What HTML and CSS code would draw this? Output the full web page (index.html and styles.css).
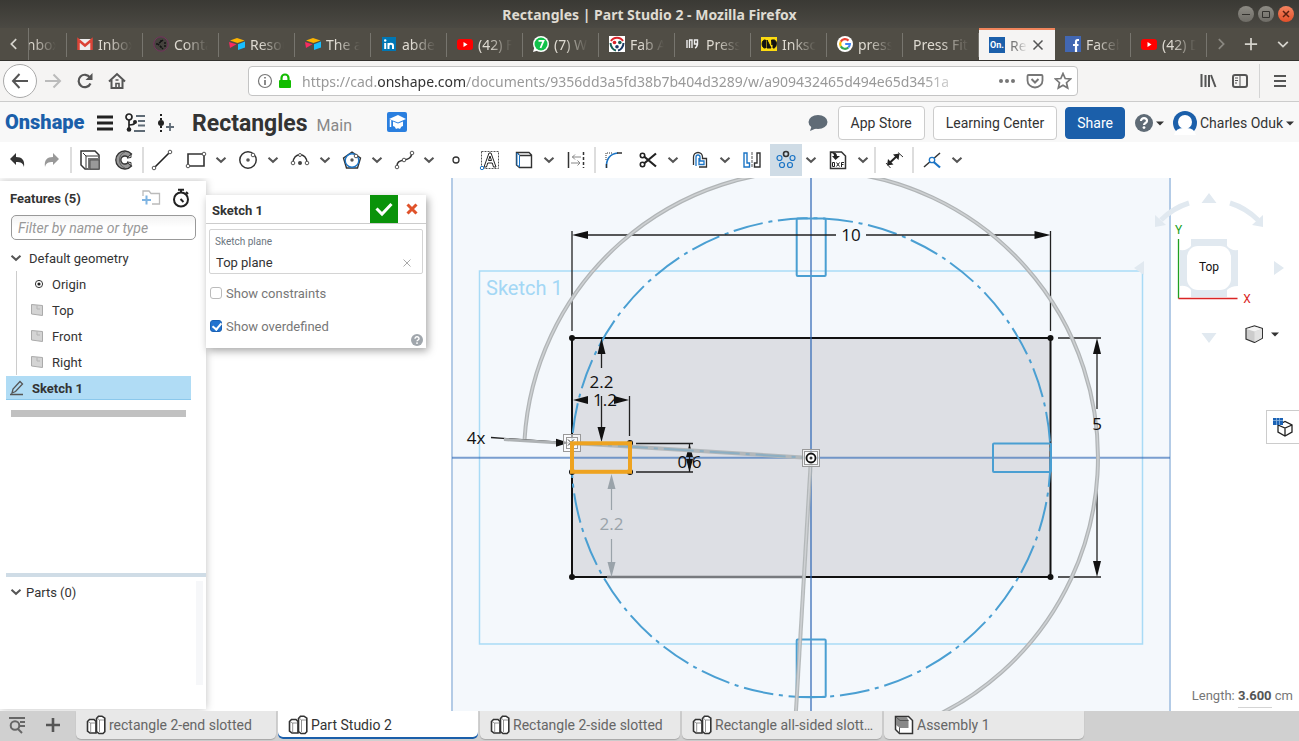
FILE: index.html
```html
<!DOCTYPE html>
<html lang="en">
<head>
    <meta charset="UTF-8">
    <meta name="viewport" content="width=device-width, initial-scale=1.0">
    <title>Rectangles | Part Studio 2</title>
    <link rel="stylesheet" href="styles.css">
</head>
<body>
    <!-- shared icons -->
    <svg class="defs" aria-hidden="true">
        <symbol id="chev" viewBox="0 0 12 12"><path d="M1.5 3.8 6 7.8l4.5-4" fill="none" stroke="#555" stroke-width="2"/></symbol>
        <symbol id="caret" viewBox="0 0 8 5"><path d="M0 .5h8L4 4.5z" fill="#333"/></symbol>
        <symbol id="youtube" viewBox="0 0 16 16"><rect x="0" y="3" width="16" height="11" rx="3" fill="#f00"/><path d="M6.500 6v5l4-2.500z" fill="#fff"/></symbol>
        <symbol id="airtable" viewBox="0 0 16 16"><path d="M1 4.500 8 2l7.500 2.500L8.500 7z" fill="#fcb400"/><path d="M9 8.200 16 5.500v6L9 14z" fill="#18bfff"/><path d="M0 6l7.500 2.300L1 12z" fill="#f82b60"/></symbol>
        <symbol id="studio" viewBox="0 0 20 20"><path d="M1.500 6.500 3.500 4.500H8l2 2V18H4l-2.500-2z" fill="#fff" stroke="#333" stroke-width="1.600"/><path d="M2 6.500l2.500 1.500H9.500M4.700 8v9.500" fill="none" stroke="#777" stroke-width=".8"/><path d="M10.500 3.500 12.500 1.200H16l2.800 2v13.500L17 18.500h-4l-2.500-2z" fill="#fff" stroke="#333" stroke-width="1.600"/><path d="M11 3l2.500 2H18M13.500 5v12" fill="none" stroke="#777" stroke-width=".8"/></symbol>
        <symbol id="plane" viewBox="0 0 12 12"><path d="M.5.500 11.500 1.500v10L.5 10z" fill="#d4d4d4" stroke="#aaa"/><path d="M6 1.500V5h3" fill="none" stroke="#b4b4b4"/></symbol>
        <symbol id="help" viewBox="0 0 18 18"><circle cx="9" cy="9" r="9" fill="currentColor"/><path d="M6 7c0-4 6.200-3.700 6 0 0 2-3 2-3 4" fill="none" stroke="#fff" stroke-width="2.200"/><circle cx="9" cy="13.600" r="1.400" fill="#fff"/></symbol>
    </svg>

    <div class="titlebar">
        <span class="titlebar-text">Rectangles | Part Studio 2 - Mozilla Firefox</span>
        <div class="window-buttons">
            <button class="win-btn" aria-label="Minimize"><svg viewBox="0 0 16 16"><path d="M4 8.500h8" stroke="#33322e"/></svg></button>
            <button class="win-btn" aria-label="Maximize"><svg viewBox="0 0 16 16"><path d="M4.500 5.500h7v6h-7z" fill="none" stroke="#33322e"/></svg></button>
            <button class="win-btn win-close" aria-label="Close"><svg viewBox="0 0 16 16"><path d="M5 5l6 6M11 5l-6 6" stroke="#5a2010" stroke-width="1.500"/></svg></button>
        </div>
    </div>

    <div class="tabbar">
        <button class="tab-arrow" aria-label="Scroll tabs left"><svg viewBox="0 0 16 16"><path d="M10.500 2.500 5 8l5.500 5.500" fill="none" stroke="#d5d3cc" stroke-width="2"/></svg></button>
        <div class="tabs">
            <div class="tab"><span class="favicon"></span><span class="tab-label">Inbox</span></div>
            <div class="tab">
                <svg class="favicon" viewBox="0 0 16 16"><path d="M1 3h14v11H1z" fill="#eee"/><path d="M1.500 14V4L8 9.500 14.500 4v10" fill="none" stroke="#db4437" stroke-width="2.500"/></svg>
                <span class="tab-label">Inbox</span>
            </div>
            <div class="tab">
                <svg class="favicon" viewBox="0 0 16 16"><circle cx="8" cy="8" r="7.200" fill="#45423d" stroke="#75325f"/><path d="M10 4 5 8l5 5M8 4v3M3 8h2M8 10v3M12 6v5" fill="none" stroke="#141414" stroke-width="1.500" stroke-dasharray="2 1"/></svg>
                <span class="tab-label">Contact</span>
            </div>
            <div class="tab"><svg class="favicon"><use href="#airtable"/></svg><span class="tab-label">Resources</span></div>
            <div class="tab"><svg class="favicon"><use href="#airtable"/></svg><span class="tab-label">The art</span></div>
            <div class="tab">
                <svg class="favicon" viewBox="0 0 16 16"><rect x="1" y="1" width="14" height="14" fill="#0077b5"/><circle cx="4.200" cy="4.500" r="1.200" fill="#fff"/><path d="M4.200 7v6M7.500 7v6M7.500 10c0-3 4.500-3 4.500 0v3" fill="none" stroke="#fff" stroke-width="2"/></svg>
                <span class="tab-label">abdel</span>
            </div>
            <div class="tab"><svg class="favicon"><use href="#youtube"/></svg><span class="tab-label">(42) Fab</span></div>
            <div class="tab">
                <svg class="favicon" viewBox="0 0 16 16"><circle cx="8" cy="8" r="8" fill="#fff"/><path d="M0 16l1.500-5L5 14.500z" fill="#fff"/><circle cx="8" cy="8" r="6.500" fill="#12c24b"/><path d="M5.500 4.800h5L7.500 12" fill="none" stroke="#fff" stroke-width="1.800"/></svg>
                <span class="tab-label">(7) Wha</span>
            </div>
            <div class="tab">
                <svg class="favicon" viewBox="0 0 16 16"><path d="M0 0h16v16H0z" fill="#fff"/><path d="M2 5C4.500 .5 11.500 .5 14 5" fill="none" stroke="#d8232a" stroke-width="2"/><path d="M1.500 7c0 4 3 7 5.500 7.500" fill="none" stroke="#175e55" stroke-width="2"/><path d="M14.500 7c0 4-3 7-5.500 7.500" fill="none" stroke="#1b3865" stroke-width="2"/><circle cx="5.500" cy="6.500" r="1.800" fill="#d8232a"/><circle cx="10.800" cy="6.500" r="1.800" fill="#175e55"/><circle cx="8" cy="10.800" r="1.800" fill="#1b3865"/></svg>
                <span class="tab-label">Fab Ac</span>
            </div>
            <div class="tab">
                <svg class="favicon" viewBox="0 0 16 16"><path d="M2 4v8M4 4h3v8M4.500 4v8M9.500 4h3v4h-3zM12.500 5c0 4 0 6-2.500 7" fill="none" stroke="#eee" stroke-width="1.400"/></svg>
                <span class="tab-label">Press fit</span>
            </div>
            <div class="tab">
                <svg class="favicon" viewBox="0 0 16 16"><path d="M0 1h16v14H0z" fill="#fddb10"/><path d="M4.500 4v8C0 13 0 3 4.500 4zM6 4l4 8H6zM10.500 4l.5 5 1-5zM12 4c5-1 4 9 0 8z" fill="#111" stroke="#111"/></svg>
                <span class="tab-label">Inksca</span>
            </div>
            <div class="tab">
                <svg class="favicon" viewBox="0 0 16 16"><circle cx="8" cy="8" r="8" fill="#fff"/><g fill="none" stroke-width="2.200"><path d="M3.800 5.600A4.900 4.900 0 0 1 11.500 4.600" stroke="#ea4335"/><path d="M3.800 5.600a4.900 4.900 0 0 0 0 4.800" stroke="#fbbc05"/><path d="M3.800 10.400a4.900 4.900 0 0 0 7.500 1.100" stroke="#34a853"/><path d="M11.300 11.500A4.900 4.900 0 0 0 12.900 8H8.200" stroke="#4285f4"/></g></svg>
                <span class="tab-label">press fi</span>
            </div>
            <div class="tab"><span class="tab-label tab-wide">Press Fit C</span></div>
            <div class="tab tab-active">
                <span class="favicon fav-on">On.</span>
                <span class="tab-label tab-short">Rect</span>
                <button class="tab-close" aria-label="Close tab"><svg viewBox="0 0 12 12"><path d="M1.500 1.500l9 9M10.500 1.500l-9 9" stroke="#555" stroke-width="1.500"/></svg></button>
            </div>
            <div class="tab">
                <svg class="favicon" viewBox="0 0 16 16"><path d="M0 0h16v16H0z" fill="#4267b2"/><path d="M14 4h-1.500Q11 4 11 6v10M8 9h5.500" fill="none" stroke="#fff" stroke-width="2.200"/></svg>
                <span class="tab-label">Facebo</span>
            </div>
            <div class="tab"><svg class="favicon"><use href="#youtube"/></svg><span class="tab-label">(42) Di</span></div>
        </div>
        <button class="tab-arrow" aria-label="Scroll tabs right"><svg viewBox="0 0 16 16"><path d="M5.500 2.500 11 8l-5.500 5.500" fill="none" stroke="#8a8881" stroke-width="2"/></svg></button>
        <button class="tab-arrow" aria-label="New tab"><svg viewBox="0 0 16 16"><path d="M8 1v14M1 8h14" stroke="#d5d3cc" stroke-width="2"/></svg></button>
        <button class="tab-arrow" aria-label="List all tabs"><svg viewBox="0 0 16 16"><path d="M2.500 5.500 8 11l5.500-5.500" fill="none" stroke="#d5d3cc" stroke-width="2"/></svg></button>
    </div>

    <div class="navbar">
        <button class="nav-btn nav-back" aria-label="Back"><svg viewBox="0 0 18 18"><path d="M17 9H2M8.500 2 2 9l6.500 7" fill="none" stroke="#555" stroke-width="2"/></svg></button>
        <button class="nav-btn" aria-label="Forward"><svg viewBox="0 0 18 18"><path d="M1 9h15M9.500 2.500 16 9l-6.500 6.500" fill="none" stroke="#bbb" stroke-width="2"/></svg></button>
        <button class="nav-btn" aria-label="Reload"><svg viewBox="0 0 18 18"><path d="M14.500 11.500A6.200 6.200 0 1 1 14 5.500" fill="none" stroke="#555" stroke-width="2.200"/><path d="M16.500 1v7h-7z" fill="#555"/></svg></button>
        <button class="nav-btn" aria-label="Home"><svg viewBox="0 0 18 18"><path d="M1 9.500 9 2l8 7.500M3.500 8v8h11V8" fill="none" stroke="#555" stroke-width="2"/><path d="M8 15.500v-4h3v4M7.500 8h3" fill="none" stroke="#555" stroke-width="1.600"/></svg></button>
        <div class="urlbar">
            <svg class="url-icon" viewBox="0 0 16 16"><circle cx="8" cy="8" r="6.500" fill="none" stroke="#777" stroke-width="1.200"/><path d="M8 7v5M8 4v1.600" stroke="#777" stroke-width="1.700"/></svg>
            <svg class="url-icon" viewBox="0 0 16 16"><rect x="2" y="7" width="12" height="8" rx="1" fill="#12bc00"/><path d="M4.500 8V5a3.500 3.500 0 0 1 7 0v3" fill="none" stroke="#12bc00" stroke-width="2.200"/></svg>
            <div class="url">https://cad.<b>onshape.com</b>/documents/9356dd3a5fd38b7b404d3289/w/a909432465d494e65d3451a</div>
            <button class="url-btn" aria-label="Page actions"><svg viewBox="0 0 18 18"><g fill="#777"><circle cx="3" cy="9" r="2"/><circle cx="9" cy="9" r="2"/><circle cx="15" cy="9" r="2"/></g></svg></button>
            <button class="url-btn" aria-label="Save to Pocket"><svg viewBox="0 0 18 18"><path d="M2.500 3h13q1 0 1 1v4.500a7.500 7 0 0 1-15 0V4q0-1 1-1z" fill="none" stroke="#777" stroke-width="1.800"/><path d="M5.500 7 9 10.500 12.500 7" fill="none" stroke="#777" stroke-width="2"/></svg></button>
            <button class="url-btn" aria-label="Bookmark"><svg viewBox="0 0 18 18"><path d="M9 1.500l2.200 5 5.300.5-4 3.700 1.200 5.300L9 13.200 4.300 16l1.200-5.300-4-3.700 5.300-.5z" fill="none" stroke="#777" stroke-width="1.700"/></svg></button>
        </div>
        <div class="nav-right">
            <button class="nav-btn" aria-label="Library"><svg viewBox="0 0 18 18"><path d="M2.500 2v13M6.500 3v12M10 3v12M12 3l4.500 12" stroke="#555" stroke-width="2"/></svg></button>
            <button class="nav-btn" aria-label="Sidebars"><svg viewBox="0 0 18 18"><rect x="2" y="3" width="14" height="12" rx="2" fill="none" stroke="#555" stroke-width="2"/><path d="M9 3v12M4 6h3M4 8.500h3M4 11h2" stroke="#555"/></svg></button>
            <button class="nav-btn nav-menu" aria-label="Menu"><svg viewBox="0 0 18 18"><path d="M3 4h12M3 9h12M3 14h12" stroke="#555" stroke-width="2"/></svg></button>
        </div>
    </div>

    <header class="app-header">
        <a class="brand" href="#">Onshape</a>
        <button class="head-btn" aria-label="Document menu"><svg viewBox="0 0 20 20"><path d="M2 4h16M2 10h16M2 16h16" stroke="#222" stroke-width="3"/></svg></button>
        <button class="head-btn" aria-label="Versions"><svg viewBox="0 0 20 20"><g fill="none" stroke="#222" stroke-width="1.700"><circle cx="4" cy="4" r="3"/><path d="M4 7v9M4 12c4 0 6-.5 6-3"/></g><circle cx="4" cy="16.500" r="2.300" fill="#222"/><circle cx="10" cy="9" r="2" fill="#222"/><path d="M11 3h9M13 8h7M13 12.500h7M9 18h11" stroke="#5f6b76" stroke-width="1.800"/></svg></button>
        <button class="head-btn head-last" aria-label="Create version"><svg viewBox="0 0 20 20"><circle cx="6" cy="10" r="3" fill="#222"/><path d="M6 1v18" stroke="#222" stroke-width="2" stroke-dasharray="2 2"/><path d="M15 10v8M11 14h8" stroke="#5f6b76" stroke-width="1.800"/></svg></button>
        <h1>Rectangles</h1>
        <span class="workspace-name">Main</span>
        <button class="learn-btn" aria-label="Learning"><svg viewBox="0 0 20 20"><rect width="20" height="20" rx="2" fill="#2a7fdf"/><path d="M2 7l9-4 8 4-8 3.500z" fill="#fff"/><path d="M3.500 8v7" stroke="#fff" stroke-width="1.500"/><path d="M6 9.500l5 2 5-2V14q-2 0-3 3-2-1.500-4 0-1-3-3-3z" fill="#fff"/></svg></button>
        <div class="head-right">
            <button class="comment-btn" aria-label="Comments"><svg viewBox="0 0 20 18"><ellipse cx="10" cy="8" rx="9.500" ry="7" fill="#5f6b76"/><path d="M4 11 2 17l7-3z" fill="#5f6b76"/></svg></button>
            <button class="btn">App Store</button>
            <button class="btn">Learning Center</button>
            <button class="btn btn-primary">Share</button>
            <button class="menu-btn help-btn" aria-label="Help"><svg class="help-icon"><use href="#help"/></svg><svg class="caret"><use href="#caret"/></svg></button>
            <button class="menu-btn user-btn"><svg class="avatar" viewBox="0 0 24 24"><circle cx="12" cy="12" r="12" fill="#1b5faa"/><circle cx="12" cy="11" r="7" fill="#fff"/><path d="M1 24q2-8 11-7 9-1 11 7z" fill="#fff"/></svg>Charles Oduk<svg class="caret"><use href="#caret"/></svg></button>
        </div>
    </header>

    <div class="toolbar">
        <button class="tool" aria-label="Undo"><svg viewBox="0 0 24 24"><path d="M4 11l6-6v4c6 0 9 3 8 10-1-4-3-5-8-5v3z" fill="#333"/></svg></button>
        <button class="tool" aria-label="Redo"><svg viewBox="0 0 24 24"><path d="M19 11l-6-6v4c-6 0-9 3-8 10 1-4 3-5 8-5v3z" fill="#999"/></svg></button>
        <span class="sep"></span>
        <button class="tool" aria-label="Copy sketch"><svg viewBox="0 0 24 24"><path d="M3 3h14l4 4v14H7l-4-4z" fill="#fff" stroke="#333" stroke-width="1.500"/><path d="M5 5l3 3h12M8 8v12" fill="none" stroke="#333"/><path d="M10 10h11v11H10z" fill="#777"/><path d="M12 12h9v9h-9z" fill="#999" stroke="#555"/></svg></button>
        <button class="tool" aria-label="Revolve"><svg viewBox="0 0 24 24"><path d="M19.500 6a9 9 0 1 0 0 12l-3.500-3.500a4 4 0 1 1 0-5z" fill="#999" stroke="#333" stroke-width="1.300"/><path d="M13 4q-5.500 2-5.500 8t5.500 8" fill="none" stroke="#555" stroke-width=".8"/><path d="M15 10l4-3.500v3zM15 14l4 3.500v-3z" fill="#fff" stroke="#333"/></svg></button>
        <span class="sep"></span>
        <button class="tool" aria-label="Line"><svg viewBox="0 0 24 24"><path d="M5 19 19 5" stroke="#222" stroke-width="1.600"/><g fill="#fff" stroke="#555"><circle cx="4" cy="20" r="1.800"/><circle cx="20" cy="4" r="1.800"/></g></svg></button>
        <button class="tool" aria-label="Rectangle"><svg viewBox="0 0 24 24"><path d="M4 6h16v12H4z" fill="none" stroke="#333" stroke-width="1.600"/><g fill="#fff" stroke="#555"><circle cx="4" cy="18" r="1.800"/><circle cx="20" cy="6" r="1.800"/></g></svg></button>
        <button class="drop" aria-label="More rectangles"><svg><use href="#chev"/></svg></button>
        <button class="tool" aria-label="Circle"><svg viewBox="0 0 24 24"><circle cx="12" cy="12" r="8.200" fill="none" stroke="#333" stroke-width="1.500"/><circle cx="12" cy="12" r="1.800" fill="#555"/><circle cx="17" cy="7" r="1.800" fill="#fff" stroke="#555"/></svg></button>
        <button class="drop" aria-label="More circles"><svg><use href="#chev"/></svg></button>
        <button class="tool" aria-label="Arc"><svg viewBox="0 0 24 24"><path d="M5 15c0-11 14-11 14 0" fill="none" stroke="#333" stroke-width="1.500"/><circle cx="12" cy="15" r="2" fill="#444"/><g fill="#fff" stroke="#555"><circle cx="5" cy="15" r="1.800"/><circle cx="19" cy="15" r="1.800"/><circle cx="12" cy="7" r="1.500"/></g></svg></button>
        <button class="drop" aria-label="More arcs"><svg><use href="#chev"/></svg></button>
        <button class="tool" aria-label="Polygon"><svg viewBox="0 0 24 24"><path d="M12 4l8.500 6-3 10h-11l-3-10z" fill="none" stroke="#333" stroke-width="1.400"/><circle cx="12" cy="12.500" r="6.800" fill="none" stroke="#1b74c5" stroke-width="1.400"/><circle cx="12" cy="12" r="1.700" fill="#555"/><circle cx="16" cy="8" r="1.800" fill="#fff" stroke="#555"/></svg></button>
        <button class="drop" aria-label="More polygons"><svg><use href="#chev"/></svg></button>
        <button class="tool" aria-label="Spline"><svg viewBox="0 0 24 24"><path d="M5 18c0-4 2-5 7-6s7-2 8-7" fill="none" stroke="#333" stroke-width="1.500"/><g fill="#fff" stroke="#555"><circle cx="5" cy="19" r="1.800"/><circle cx="12" cy="12" r="1.800"/><circle cx="20" cy="5" r="1.800"/></g></svg></button>
        <button class="drop" aria-label="More splines"><svg><use href="#chev"/></svg></button>
        <button class="tool" aria-label="Point"><svg viewBox="0 0 24 24"><circle cx="12" cy="12" r="3" fill="none" stroke="#333" stroke-width="1.300"/></svg></button>
        <button class="tool" aria-label="Text"><svg viewBox="0 0 24 24"><path d="M3.500 3.500h17v17h-17z" fill="none" stroke="#555" stroke-dasharray="2 1"/><path d="M6 19 11 5h2l5 14h-2.500l-1.200-4H9.700l-1.200 4zM10.500 12.500h3L12 8z" fill="#fff" stroke="#222"/><circle cx="4" cy="20" r="1.700" fill="#fff" stroke="#1b74c5"/></svg></button>
        <button class="tool" aria-label="Use"><svg viewBox="0 0 24 24"><path d="M4.500 4.500H17L19.500 7v12.500H7.500l-3-2.500zM4.500 4.500l3 3h12" fill="none" stroke="#333" stroke-width="1.400"/><path d="M7.500 7.500v11.500L5 16.500V5z" fill="#fff" stroke="#1b74c5"/></svg></button>
        <button class="drop" aria-label="More projections"><svg><use href="#chev"/></svg></button>
        <button class="tool" aria-label="Construction"><svg viewBox="0 0 24 24"><path d="M4.500 4v16" stroke="#333" stroke-width="1.500"/><path d="M19.500 4v16" stroke="#333" stroke-width="1.500" stroke-dasharray="3 2"/><path d="M8 9h9M11 6.500 8.500 9l2.500 2.500M7 15h9M13.500 12.500 16 15l-2.500 2.500" fill="none" stroke="#888"/></svg></button>
        <span class="sep"></span>
        <button class="tool" aria-label="Fillet"><svg viewBox="0 0 24 24"><path d="M4 12V5h7" fill="none" stroke="#333" stroke-dasharray="1 1"/><path d="M4.500 20C4 12 7 6 16 5" fill="none" stroke="#1b74c5" stroke-width="1.600"/><path d="M4.500 20v-4M15 5h5" stroke="#333" stroke-width="1.300"/></svg></button>
        <button class="tool" aria-label="Trim"><svg viewBox="0 0 24 24"><path d="M8 8.500l12 10M8 15.500l12-10" stroke="#222" stroke-width="2.200"/><g fill="none" stroke="#222" stroke-width="1.600"><circle cx="6.500" cy="7.500" r="2.200"/><circle cx="6.500" cy="16.500" r="2.200"/></g></svg></button>
        <button class="drop" aria-label="More trim tools"><svg><use href="#chev"/></svg></button>
        <button class="tool" aria-label="Offset"><svg viewBox="0 0 24 24"><path d="M5.500 17V9a4.500 4.500 0 0 1 9 0v1.500h4v8.500H11" fill="none" stroke="#333" stroke-width="1.300"/><path d="M8 18V9a2 2 0 0 1 4 0v4h4v3.500h-5V10" fill="none" stroke="#1b74c5" stroke-width="1.300"/></svg></button>
        <button class="drop" aria-label="More offset tools"><svg><use href="#chev"/></svg></button>
        <button class="tool" aria-label="Mirror"><svg viewBox="0 0 24 24"><path d="M4 5v14h5.500v-4H7V5z" fill="none" stroke="#1b74c5" stroke-width="1.400"/><path d="M20 5v14h-5.500v-4H17V5z" fill="none" stroke="#333" stroke-width="1.400"/><path d="M12 4v16" stroke="#555" stroke-dasharray="3 1"/></svg></button>
        <button class="tool tool-active" aria-label="Circular pattern"><svg viewBox="0 0 24 24"><circle cx="12" cy="6" r="2.500" fill="none" stroke="#333" stroke-width="1.600"/><g fill="none" stroke="#1b74c5" stroke-width="1.200"><circle cx="5.500" cy="10" r="2.500"/><circle cx="18.500" cy="10" r="2.500"/><circle cx="8" cy="17" r="2.500"/><circle cx="16" cy="17" r="2.500"/></g></svg></button>
        <button class="drop" aria-label="More patterns"><svg><use href="#chev"/></svg></button>
        <button class="tool" aria-label="Insert DXF"><svg viewBox="0 0 24 24"><path d="M4.500 4v16.500h15V8l-4-4z" fill="#fff" stroke="#333" stroke-width="1.500"/><path d="M5 4q6 0 6 4h3l-4.500 4L6 8h2q0-3-3-3z" fill="#222"/><path d="M6.500 14.500v4h2v-4zM10.500 14.500l3 4M13.500 14.500l-3 4M15.500 19v-4.500h2.500M15.500 16.500h2" fill="none" stroke="#222"/></svg></button>
        <button class="drop" aria-label="More import tools"><svg><use href="#chev"/></svg></button>
        <span class="sep"></span>
        <button class="tool" aria-label="Dimension"><svg viewBox="0 0 24 24"><path d="M7 15.500l8.500-8" stroke="#222" stroke-width="2"/><path d="M5 17.500l1-6.500 5.500 5.500zM17.500 5.500l-1 6.500L11 6.500z" fill="#222"/><path d="M16 4.500l5 4.500M4 15l4.500 5" stroke="#333"/></svg></button>
        <span class="sep"></span>
        <button class="tool" aria-label="Constraint"><svg viewBox="0 0 24 24"><path d="M4 19 20 5" stroke="#333" stroke-width="1.500"/><path d="M12 12.500l8 7" stroke="#1b74c5" stroke-width="2.200"/><circle cx="12" cy="12" r="2.700" fill="#fff" stroke="#1b74c5" stroke-width="1.300"/></svg></button>
        <button class="drop" aria-label="More constraints"><svg><use href="#chev"/></svg></button>
    </div>

    <main class="workspace">
        <svg class="sketch" viewBox="0 178 1299 533">
            <rect x="452" y="170" width="718" height="560" fill="#f4f8fc" stroke="#b3cbe6" stroke-width="2"/>
            <!-- sketch plane border -->
            <rect x="479.500" y="271" width="663" height="373" fill="none" stroke="#a9dbf6" stroke-width="1.500"/>
            <text class="sketch-name" x="486" y="295">Sketch 1</text>
            <rect x="572" y="338" width="478.500" height="239" fill="#dddfe4" stroke="#111" stroke-width="2"/>
            <path d="M607 577H805" stroke="#777a7e" stroke-width="2.500"/>
            <path d="M452 457.700H1170M811 170V720" stroke="#2f68b5" stroke-opacity=".62" stroke-width="2"/>

            <!-- pattern instances -->
            <g fill="none" stroke="#4a9fd2" stroke-width="2">
                <rect x="796.700" y="218.500" width="29" height="57.500" rx="1"/>
                <rect x="796.700" y="639.500" width="29" height="57.500" rx="1"/>
                <rect x="993" y="443.500" width="58" height="28.500" rx="1"/>
                <path d="M818.500 697.100A239.500 239.500 0 0 1 803.500 218.300A239.500 239.500 0 0 1 818.500 697.100" stroke-dasharray="30 5.800 4 5.600"/>
            </g>

            <!-- dimensions -->
            <g stroke="#222" stroke-width="1.300">
                <path d="M572 231V331M1050.500 231V331M586 235H836M866 235H1036"/>
                <path d="M1058 338H1101M1058 577H1101M1097 350V409M1097 438V565"/>
                <path d="M601.500 350V368M601.500 396V430M629.500 396V436"/>
                <path d="M636 443.500H693M636 472H693M689.500 444V472"/>
            </g>
            <g fill="#111">
                <path d="M572 235l16-4v8zM1050.500 235l-16-4v8zM1097 338l-4 16h8zM1097 577l-4-16h8z"/>
                <path d="M601.500 338l-4 16h8zM601.500 442l-4-15h8zM573 400l15-4v8zM629 400l-15-4v8z"/>
                <path d="M689.500 444l-4 15h8zM689.500 472l-4-15h8z"/>
            </g>
            <path d="M611.500 480V510M611.500 539V570" stroke="#9aa3aa" stroke-width="1.200"/>
            <path d="M611.500 474l-4 15h8zM611.500 577l-4-15h8z" fill="#9aa3aa"/>

            <!-- angular preview -->
            <g fill="none">
                <path d="M524.500 440A287 287 0 1 1 794 744" stroke="#b1b5b7" stroke-width="4"/>
                <path d="M524.500 440A287 287 0 1 1 794 744" stroke="#cdd0d2" stroke-width="1.500"/>
                <path d="M811 458L794 744" stroke="#aeb2b4" stroke-width="4" stroke-opacity=".9"/>
                <path d="M811 458L794 744" stroke="#ced0d3" stroke-width="1.500"/>
                <path d="M491 437.500L570 443" stroke="#222" stroke-width="1.300"/>
                <path d="M504 439.500L560 443" stroke="#aeb2b4" stroke-width="3"/>
                <path d="M569 442.700l-13-4v8z" fill="#111"/>
                <path d="M572 443L811 458" stroke="#b3b8bb" stroke-width="4"/>
                <path d="M572 443L811 458" stroke="#8caec2" stroke-width="2" stroke-dasharray="30 6 4 6"/>
            </g>

            <g fill="#111">
                <circle cx="572" cy="338" r="3"/><circle cx="1050.500" cy="338" r="3"/>
                <circle cx="572" cy="577" r="3"/><circle cx="1050.500" cy="577" r="3"/>
                <circle cx="572" cy="472" r="3"/><circle cx="630" cy="472" r="3"/><circle cx="630" cy="443" r="3"/>
            </g>
            <g class="node">
                <rect x="563.500" y="434.500" width="17" height="17"/>
                <rect x="566.500" y="437.500" width="11" height="11"/>
                <rect x="802.500" y="449.500" width="17" height="17"/>
                <rect x="804.500" y="451.500" width="13" height="13"/>
            </g>
            <path d="M568 439.500l6 6M574 439.500l-6 6" stroke="#333"/>
            <circle cx="811" cy="458" r="4.500" fill="#fff" stroke="#111" stroke-width="1.800"/>
            <circle cx="811" cy="458" r="1.500" fill="#333"/>
            <rect x="572" y="443.300" width="58" height="28.500" fill="none" stroke="#eea320" stroke-width="4"/>

            <g class="dim">
                <text x="851" y="241">10</text>
                <text x="1097" y="430">5</text>
                <text x="601.500" y="388">2.2</text>
                <text x="605" y="406">1.2</text>
                <text x="689.500" y="468">0.6</text>
                <text x="476" y="444">4x</text>
                <text class="dim-muted" x="611.500" y="530">2.2</text>
            </g>
        </svg>

        <aside class="features">
            <div class="features-head">
                <h2>Features (5)</h2>
                <button class="icon-btn" aria-label="Add folder"><svg viewBox="0 0 20 20"><path d="M2 8V3h6l2 2.500h8.500V16H11" fill="none" stroke="#bbb" stroke-width="1.300"/><path d="M5.500 7.500v9M1 12h9" stroke="#7fb4e2" stroke-width="2"/></svg></button>
                <button class="icon-btn" aria-label="Rebuild times"><svg viewBox="0 0 20 20"><circle cx="10" cy="11.500" r="7" fill="none" stroke="#222" stroke-width="2"/><path d="M7 1.800h6M10 2v3M15 4l2 2M9.500 11l3 3" stroke="#222" stroke-width="2"/></svg></button>
            </div>
            <input class="filter" type="text" placeholder="Filter by name or type" aria-label="Filter features">
            <div class="tree-group"><svg class="chev"><use href="#chev"/></svg>Default geometry</div>
            <ul class="tree">
                <li><svg viewBox="0 0 12 12"><circle cx="8" cy="6" r="3.600" fill="none" stroke="#333"/><circle cx="8" cy="6" r="1.600" fill="#222"/></svg>Origin</li>
                <li><svg><use href="#plane"/></svg>Top</li>
                <li><svg><use href="#plane"/></svg>Front</li>
                <li><svg><use href="#plane"/></svg>Right</li>
            </ul>
            <div class="tree-selected"><svg viewBox="0 0 16 16"><path d="M3 13l1-4 7-7.500 2.500 2.500-7 7.500zM1 14.500h13" fill="none" stroke="#555" stroke-width="1.300"/></svg>Sketch 1</div>
            <div class="rollback"></div>
            <div class="parts">
                <div class="tree-group"><svg class="chev"><use href="#chev"/></svg>Parts (0)</div>
            </div>
        </aside>

        <form class="dialog">
            <div class="dialog-head">
                <h2>Sketch 1</h2>
                <button class="ok" type="button" aria-label="Accept"><svg viewBox="0 0 18 18"><path d="M1.500 8.500 7 14 16.500 4" fill="none" stroke="#fff" stroke-width="3"/></svg></button>
                <button class="cancel" type="button" aria-label="Cancel"><svg viewBox="0 0 12 12"><path d="M1.500 1.500l9 9M10.500 1.500l-9 9" stroke="#e0522a" stroke-width="3"/></svg></button>
            </div>
            <div class="field">
                <span class="field-label">Sketch plane</span>
                <div class="field-value">Top plane<button type="button" aria-label="Clear plane"><svg viewBox="0 0 8 8"><path d="M.5.500l7 7M7.500.500l-7 7" stroke="#aaa"/></svg></button></div>
            </div>
            <label class="check"><input type="checkbox">Show constraints</label>
            <label class="check"><input type="checkbox" checked>Show overdefined</label>
            <button class="dialog-help" type="button" aria-label="Sketch help"><svg><use href="#help"/></svg></button>
        </form>

        <svg class="view-cube" viewBox="1130 190 160 160">
            <g fill="#e1e9f0">
                <path d="M1209 193l7.500 10h-15zM1209 343l-7.500-10h15zM1134 268l10-7v14zM1284 268l-10-7v14z"/>
                <path d="M1189 203q-16 5-28 17" fill="none" stroke="#e1e9f0" stroke-width="5"/>
                <path d="M1155 227v-12l11 10zM1263 227v-12l-11 10z"/>
                <path d="M1230 203q16 5 28 17" fill="none" stroke="#e1e9f0" stroke-width="5"/>
                <path d="M1191 239h36v7q4 5 11 4v36q-7 0-11 4v7h-36v-7q-4-5-11-4v-36q7 1 11-4z"/>
            </g>
            <rect x="1187" y="246" width="44" height="44" rx="11" fill="#fff"/>
            <path d="M1178.500 239v59.500" stroke="#20a020" stroke-width="1.300"/>
            <path d="M1178.500 298.500h59" stroke="#d92525" stroke-width="1.300"/>
            <text class="axis-y" x="1178.500" y="234">Y</text>
            <text class="axis-x" x="1247" y="303">X</text>
            <text class="face" x="1209" y="271">Top</text>
        </svg>
        <button class="render-mode" aria-label="View options">
            <svg class="cube" viewBox="0 0 18 18"><path d="M1 3.500 9.500 1l8 2.500v9.500L9.500 17.500 1 14z" fill="#ccc" stroke="#333" stroke-width="1.200"/><path d="M1.500 4l8 2.500 7.500-2.500-7.500-2.500z" fill="#f4f4f4"/><path d="M9.500 6.500l7.500-2.500v9L9.500 17z" fill="#e2e2e2"/></svg>
            <svg class="caret"><use href="#caret"/></svg>
        </button>
        <button class="config-btn" aria-label="Configurations"><svg viewBox="0 0 20 20"><path d="M5 8l7-3.500 7 3.500v7l-7 4-7-4zM5 8l7 3 7-3M12 11v8" fill="#fff" stroke="#222" stroke-width="1.300"/><path d="M0 1h10v7H0z" fill="#1b62b5"/><path d="M3.500 1v7M6.500 1v7M0 3.500h10" stroke="#8eb6e0" stroke-width=".8"/></svg></button>
        <div class="measure">Length: <b>3.600</b> cm</div>
    </main>

    <footer class="doc-tabs">
        <button class="foot-btn" aria-label="Tab manager"><svg viewBox="0 0 18 18"><path d="M1 2h16M12 6h5M12 10h5" stroke="#666" stroke-width="1.800"/><circle cx="7" cy="9.500" r="4.300" fill="none" stroke="#666" stroke-width="2"/><path d="M10 13l4 4" stroke="#666" stroke-width="2"/></svg></button>
        <button class="foot-btn foot-add" aria-label="Insert new tab"><svg viewBox="0 0 18 18"><path d="M9 2v14M2 9h14" stroke="#555" stroke-width="2.600"/></svg></button>
        <button class="doc-tab"><svg><use href="#studio"/></svg><span>rectangle 2-end slotted</span></button>
        <button class="doc-tab doc-active"><svg><use href="#studio"/></svg><span>Part Studio 2</span></button>
        <button class="doc-tab"><svg><use href="#studio"/></svg><span>Rectangle 2-side slotted</span></button>
        <button class="doc-tab"><svg><use href="#studio"/></svg><span>Rectangle all-sided slotted</span></button>
        <button class="doc-tab"><svg viewBox="0 0 20 20"><path d="M1.500 1.500h13l4 4v13h-13l-4-4z" fill="#fff" stroke="#333" stroke-width="1.500"/><path d="M5.500 5.500V18" fill="none" stroke="#555"/><path d="M2 2h10.500l2 3v8H6L2 10z" fill="#888"/><path d="M2 2l4 3.500h8.500" fill="none" stroke="#555"/></svg><span>Assembly 1</span></button>
    </footer>
</body>
</html>
```
FILE: styles.css
```css
* {
    margin: 0;
    padding: 0;
    box-sizing: border-box;
}

body {
    font-family: Roboto, sans-serif;
    font-size: 14px;
    color: #333;
    background: white;
    height: 100vh;
    display: flex;
    flex-direction: column;
    overflow: hidden;
}

button {
    font: inherit;
    color: inherit;
    background: none;
    border: none;
    display: flex;
    align-items: center;
    justify-content: center;
    flex-shrink: 0;
}

svg {
    display: block;
    flex-shrink: 0;
}

.defs {
    position: absolute;
    width: 0;
    height: 0;
}

/* window frame */
.titlebar {
    height: 28px;
    display: flex;
    align-items: center;
    justify-content: center;
    position: relative;
    background: linear-gradient(#3a3934, #4b4943);
    color: #dfdbd2;
    font-family: "Noto Sans", sans-serif;
    font-weight: bold;
    flex-shrink: 0;
}

.window-buttons {
    position: absolute;
    right: 5px;
    display: flex;
    gap: 4px;
}

.win-btn {
    width: 16px;
    height: 16px;
    border-radius: 50%;
    background: linear-gradient(#8d8b84, #6e6c66);
}

.win-btn svg {
    width: 16px;
}

.win-close {
    background: linear-gradient(#f58460, #e2502a);
}

.tabbar {
    height: 33px;
    display: flex;
    background: #504d45;
    border-bottom: 1px solid #33322e;
    flex-shrink: 0;
    font-family: "Noto Sans", sans-serif;
    color: #dfdbd2;
}

.tab-arrow {
    width: 28px;
}

.tab-arrow:nth-last-child(-n+2) {
    width: 32px;
}

.tab-arrow svg {
    width: 14px;
}

.tabs {
    flex: 1;
    display: flex;
    justify-content: flex-end;
    overflow: hidden;
    border-left: 1px solid #77756e;
}

.tab {
    flex: 0 0 76px;
    display: flex;
    align-items: center;
    gap: 5px;
    padding-left: 10px;
    background: linear-gradient(#77756e, #77756e) right 5px / 1px 24px no-repeat;
}

.favicon {
    width: 16px;
    height: 16px;
    flex-shrink: 0;
}

.tab-label {
    width: 34px;
    overflow: hidden;
    white-space: nowrap;
    -webkit-mask-image: linear-gradient(90deg, #000 30%, transparent);
    mask-image: linear-gradient(90deg, #000 30%, transparent);
}

.tab-wide {
    width: 56px;
    -webkit-mask-image: linear-gradient(90deg, #000 50%, transparent);
    mask-image: linear-gradient(90deg, #000 50%, transparent);
}

.tab-active {
    background: #f5f4f3;
    border-top: 2px solid #f0855c;
    color: #777;
}

.fav-on {
    background: #1b5faa;
    color: white;
    font: bold 9px/16px Roboto, sans-serif;
    text-align: center;
}

.tab-short {
    width: 17px;
}

.tab-close {
    width: 12px;
}

.navbar {
    height: 41px;
    display: flex;
    align-items: center;
    background: #f5f4f3;
    border-bottom: 1px solid #ccc;
    padding-left: 3px;
    flex-shrink: 0;
}

.nav-btn {
    width: 32px;
    height: 34px;
}

.nav-btn svg {
    width: 18px;
}

.nav-back {
    width: 34px;
    border: 1px solid #aaa;
    border-radius: 50%;
    background: white;
}

.urlbar {
    flex: 1;
    min-width: 0;
    height: 30px;
    display: flex;
    align-items: center;
    gap: 4px;
    margin-left: 115px;
    padding: 0 2px 0 8px;
    background: white;
    border: 1px solid #c4c4c4;
    border-radius: 4px;
}

.url-icon {
    width: 16px;
}

.url {
    flex: 1;
    min-width: 0;
    margin-left: 5px;
    overflow: hidden;
    white-space: nowrap;
    font-family: "Noto Sans", sans-serif;
    color: #999;
    -webkit-mask-image: linear-gradient(90deg, #000 90%, transparent 97%);
    mask-image: linear-gradient(90deg, #000 90%, transparent 97%);
}

.url b {
    font-weight: normal;
    color: #333;
}

.url-btn {
    width: 24px;
}

.url-btn svg {
    width: 18px;
}

.nav-right {
    display: flex;
    margin-left: 114px;
}

.nav-menu {
    width: 40px;
    margin-left: 3px;
    border-left: 1px solid #d4d4d4;
}

/* document header */
.app-header {
    height: 40px;
    display: flex;
    align-items: center;
    padding: 2px 5px 0;
    background: #f8f8f8;
    flex-shrink: 0;
}

.brand {
    color: #1b5faa;
    font-size: 20px;
    font-weight: 900;
    line-height: 24px;
    text-decoration: none;
    width: 90px;
    padding-bottom: 2px;
}

.head-btn {
    width: 20px;
    margin-right: 10px;
}

.head-btn svg,
.learn-btn svg {
    width: 20px;
}

.head-last {
    margin-right: 17px;
}

.app-header h1 {
    font-size: 23px;
    line-height: 28px;
    padding-top: 2px;
}

.workspace-name {
    font-size: 16px;
    color: #888;
    margin: 4px 35px 0 9px;
}

.learn-btn {
    padding-bottom: 2px;
}

.head-right {
    display: flex;
    align-items: center;
    gap: 8px;
    margin-left: auto;
}

.comment-btn svg {
    width: 20px;
}

.comment-btn {
    margin-right: 2px;
}

.btn {
    height: 34px;
    padding: 0 12px;
    background: white;
    border: 1px solid #ccc;
    border-radius: 4px;
}

.btn-primary {
    height: 32px;
    padding: 0 11px;
    background: #1b5faa;
    border-color: #1b5faa;
    color: white;
}

.menu-btn {
    gap: 3px;
}

.help-btn {
    margin: 0 1px 0 2px;
    color: #5f6b76;
}

.help-icon {
    width: 18px;
    height: 18px;
}

.caret {
    width: 8px;
    height: 5px;
}

.avatar {
    width: 24px;
}

/* sketch toolbar */
.toolbar {
    height: 36px;
    display: flex;
    align-items: center;
    padding-left: 1px;
    flex-shrink: 0;
}

.tool {
    width: 32px;
    height: 32px;
    margin: 0 1px;
}

.tool svg {
    width: 24px;
}

.tool-active {
    background: #cfdce6;
}

.drop {
    width: 16px;
    height: 32px;
    margin-right: 2px;
}

.drop svg,
.chev {
    width: 12px;
    height: 12px;
}

.sep {
    width: 2px;
    height: 26px;
    margin: 0 1px;
    background: #ddd;
}

.workspace {
    flex: 1;
    min-height: 0;
    display: flex;
    align-items: flex-start;
    position: relative;
    background: white;
    overflow: hidden;
}

.sketch {
    position: absolute;
    top: 0;
    left: 0;
    width: 100%;
    height: 100%;
}

.sketch-name {
    font-size: 20px;
    fill: #a3d7f5;
}

.dim {
    font: 17px "Open Sans", sans-serif;
    fill: #111;
    text-anchor: middle;
}

.dim-muted {
    fill: #9aa3aa;
}

.node {
    fill: rgba(255, 255, 255, 0.6);
    stroke: #999;
}

/* feature list */
.features {
    position: relative;
    align-self: stretch;
    width: 206px;
    margin: 3px 0 2px;
    display: flex;
    flex-direction: column;
    background: white;
    box-shadow: 0 0 8px rgba(0, 0, 0, 0.25);
    font-size: 13px;
}

.features-head {
    display: flex;
    align-items: center;
    gap: 10px;
    height: 34px;
    padding: 0 15px 0 10px;
}

.features h2,
.dialog h2 {
    flex: 1;
    font-size: 13px;
    font-weight: bold;
}

.icon-btn svg {
    width: 20px;
}

.filter {
    height: 25px;
    margin: 0 10px 0 11px;
    padding: 0 6px;
    border: 1px solid #999;
    border-radius: 5px;
    background: linear-gradient(#f3f3f3, #fff 50%);
    font: italic 14px Roboto, sans-serif;
}

.filter::placeholder {
    color: #999;
}

.tree-group {
    display: flex;
    align-items: center;
    gap: 7px;
    height: 26px;
    margin: 5px 0 0 10px;
}

.tree {
    list-style: none;
    margin-left: 16px;
    border-left: 1px solid #ccc;
}

.tree li {
    display: flex;
    align-items: center;
    gap: 9px;
    height: 26px;
    padding-left: 14px;
}

.tree svg {
    width: 12px;
    height: 12px;
}

.tree-selected {
    display: flex;
    align-items: center;
    gap: 7px;
    height: 24px;
    margin: 1px 15px 0 6px;
    padding-left: 3px;
    background: #b0dcf5;
    box-shadow: inset 0 -1px #8bc8ec;
    font-weight: bold;
}

.tree-selected svg {
    width: 16px;
}

.rollback {
    height: 7px;
    margin: 10px 20px 0 11px;
    background: #c1c1c1;
}

.parts {
    height: 136px;
    margin: auto 0 0 6px;
    border-top: 4px solid #cfdce6;
    background: linear-gradient(#f6f7f9, #f6f7f9) right 3px top 4px / 7px 104px no-repeat;
}

.parts .tree-group {
    margin: 2px 0 0 4px;
    gap: 4px;
}

/* sketch dialog */
.dialog {
    position: relative;
    width: 220px;
    height: 153px;
    margin-top: 17px;
    background: white;
    box-shadow: 2px 3px 8px rgba(0, 0, 0, 0.35);
    font-size: 13px;
}

.dialog-head {
    display: flex;
    align-items: center;
    height: 29px;
    padding-left: 6px;
    border-bottom: 1px solid #ccc;
}

.dialog h2 {
    padding-top: 2px;
}

.ok {
    width: 28px;
    height: 28px;
    background: #0a930a;
}

.ok svg {
    width: 18px;
}

.cancel {
    width: 28px;
}

.cancel svg {
    width: 12px;
}

.field {
    height: 45px;
    margin: 5px 3px 7px;
    padding: 5px;
    border: 1px solid #d4d4d4;
    border-radius: 2px;
}

.field-label {
    display: block;
    font-size: 10px;
    line-height: 14px;
    color: #6b7680;
}

.field-value {
    display: flex;
    align-items: center;
    justify-content: space-between;
    padding: 5px 6px 0 1px;
    line-height: 18px;
}

.field-value svg {
    width: 8px;
}

.check {
    display: flex;
    align-items: center;
    gap: 4px;
    height: 24px;
    margin-bottom: 9px;
    padding-left: 4px;
    color: #777;
}

.check input {
    appearance: none;
    width: 12px;
    height: 12px;
    border: 1px solid #bbb;
    border-radius: 3px;
}

.check input:checked {
    border-color: #1b62b5;
    background: #2273cf;
}

.check input:checked::after {
    content: "";
    display: block;
    width: 4px;
    height: 7px;
    margin-left: 3px;
    border: solid white;
    border-width: 0 2px 2px 0;
    transform: rotate(40deg);
}

.dialog-help {
    position: absolute;
    right: 3px;
    bottom: 2px;
    color: #a0a6ac;
}

.dialog-help svg {
    width: 12px;
    height: 12px;
}

/* view controls lie over the canvas */
.view-cube {
    position: absolute;
    top: 12px;
    right: 9px;
    width: 160px;
    height: 160px;
    text-anchor: middle;
    font-size: 12px;
}

.axis-y {
    fill: #20a020;
}

.axis-x {
    fill: #d92525;
}

.face {
    fill: #111;
}

.render-mode {
    position: absolute;
    top: 147px;
    right: 20px;
    gap: 8px;
}

.cube {
    width: 18px;
}

.config-btn {
    position: absolute;
    top: 232px;
    right: -1px;
    width: 34px;
    height: 34px;
    background: white;
    border: 1px solid #ccc;
}

.config-btn svg {
    width: 20px;
}

.measure {
    position: absolute;
    right: 6px;
    bottom: 3px;
    color: #777;
    font-size: 13px;
    line-height: 22px;
}

.measure b {
    color: #555;
    display: inline-block;
    border-bottom: 1px solid #d4d4d4;
}

/* document tabs */
.doc-tabs {
    height: 30px;
    display: flex;
    gap: 2px;
    background: #d0d0d0;
    padding-bottom: 2px;
    flex-shrink: 0;
}

.foot-btn {
    width: 34px;
}

.foot-btn svg {
    width: 18px;
}

.foot-add {
    margin-right: 4px;
}

.doc-tab {
    width: 200px;
    justify-content: flex-start;
    gap: 3px;
    padding: 0 8px 0 10px;
    background: #e8e8e8;
    border-radius: 0 0 5px 5px;
    box-shadow: 0 1px 1px rgba(0, 0, 0, 0.2);
    color: #666;
}

.doc-tab svg {
    width: 20px;
    height: 20px;
}

.doc-tab span {
    overflow: hidden;
    white-space: nowrap;
    text-overflow: ellipsis;
}

.doc-active {
    background: white;
    color: #333;
    box-shadow: inset 0 -2px #1b5faa;
}
```
